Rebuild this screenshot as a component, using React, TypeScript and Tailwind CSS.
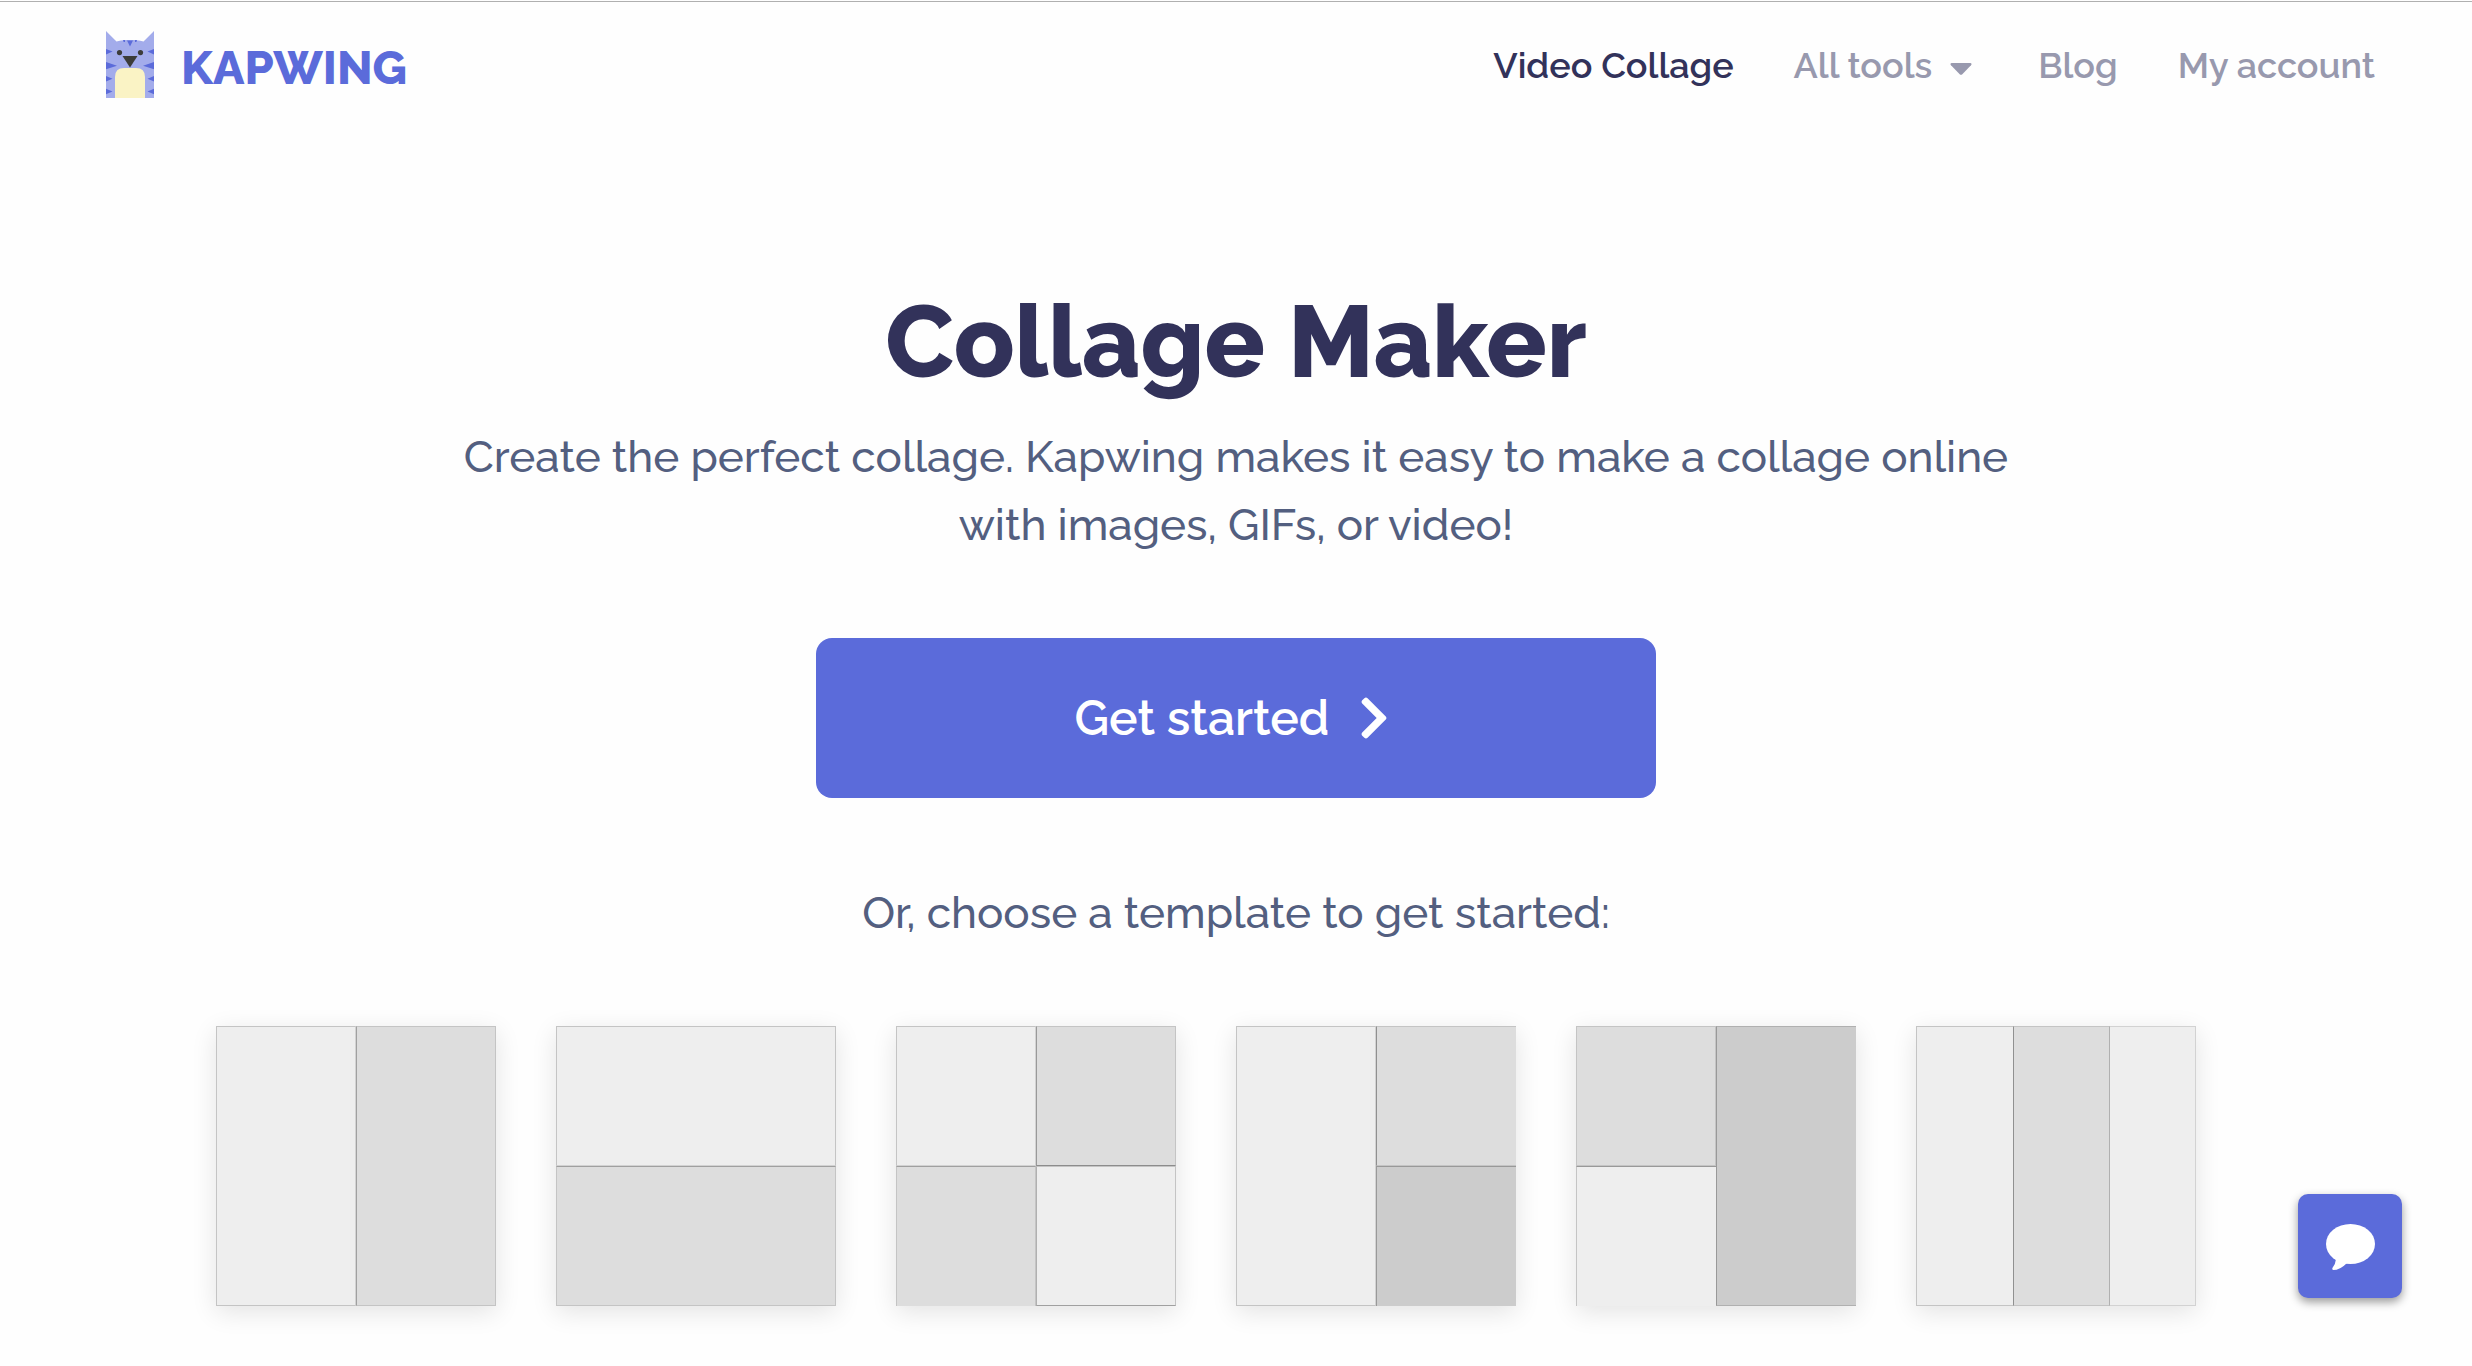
import React from "react";
import clsx from "clsx";

function CatLogo() {
  return (
    <svg className="mb-0.5 h-[67px] w-12 shrink-0" viewBox="0 0 48 67" aria-hidden="true">
      <path
        fill="#a3aceb"
        d="M0 0 L10.5 10.6 Q14.5 9 20 9 H28 Q33.5 9 37.5 10.6 L48 0 V67 H0 Z"
      />
      <g fill="#5b6bda">
        <path d="M21 9.5 H27 L24 15.5 Z" />
        <path d="M17 9 H19 V11 H17.6 Z" />
        <path d="M31 9 H29 V11 H30.4 Z" />
        <path d="M0 18 L6.5 20.6 L0 23.4 Z M48 18 L41.5 20.6 L48 23.4 Z" />
        <path d="M0 31 L11 34.7 L0 38.2 Z M48 31 L37 34.7 L48 38.2 Z" />
        <path d="M0 45 L6.5 47.8 L0 50.6 Z M48 45 L41.5 47.8 L48 50.6 Z" />
        <path d="M0 57.8 L6.5 60.4 L0 63.2 Z M48 57.8 L41.5 60.4 L48 63.2 Z" />
      </g>
      <path fill="#faf3c5" d="M9 67 V46 Q9 37 18 37 H30 Q39 37 39 46 V67 Z" />
      <g fill="#3c3c3a">
        <circle cx="13.5" cy="21.6" r="2.6" />
        <circle cx="34.5" cy="21.6" r="2.6" />
        <path d="M16.5 25 H31.5 L24 36.5 Z" />
      </g>
    </svg>
  );
}

function Header() {
  return (
    <header className="mt-px flex border-t border-[#b0b0b0] pr-[97px] pl-[106px]">
      <div className="flex min-h-[126px] w-full items-center justify-between">
        <a href="#" className="flex items-center gap-[27px]">
          <CatLogo />
          <span className="pt-1.5 text-[47px] leading-[54px] font-extrabold text-[#5b6bda]">
            KAPWING
          </span>
        </a>
        <nav className="flex items-center gap-[60px] text-[36px] leading-[54px] font-semibold whitespace-nowrap text-[#9899ae]">
          <a href="#" className="text-[#32325a]">
            Video Collage
          </a>
          <button type="button" className="flex items-center gap-[18px] pr-1.5">
            All tools
            <svg className="mt-2 h-3 w-[22px]" viewBox="0 0 22 12" aria-hidden="true">
              <path
                fill="currentColor"
                d="M1.5 0 H20.5 Q22.4 0.6 21 2.2 L12.3 11.2 Q11 12.2 9.7 11.2 L1 2.2 Q-0.4 0.6 1.5 0 Z"
              />
            </svg>
          </button>
          <a href="#">Blog</a>
          <a href="#">My account</a>
        </nav>
      </div>
    </header>
  );
}

interface Cell {
  name: string;
  className: string;
}

interface Template {
  label: string;
  grid: string;
  cells: Cell[];
}

const TEMPLATES: Template[] = [
  {
    label: "Two columns",
    grid: "grid-cols-2",
    cells: [
      { name: "left", className: "bg-[#eeeeee] border border-r-[#d2d2d2]" },
      { name: "right", className: "bg-[#dddddd] border border-l-[#a0a0a0]" },
    ],
  },
  {
    label: "Two rows",
    grid: "grid-rows-2",
    cells: [
      { name: "top", className: "bg-[#eeeeee] border border-b-[#d2d2d2]" },
      { name: "bottom", className: "bg-[#dddddd] border border-t-[#a0a0a0]" },
    ],
  },
  {
    label: "Four squares",
    grid: "grid-cols-2 grid-rows-2",
    cells: [
      { name: "a", className: "bg-[#eeeeee] border border-r-[#d2d2d2] border-b-[#d2d2d2]" },
      { name: "b", className: "bg-[#dddddd] border border-b-[#8c8c8c] border-l-[#999999]" },
      { name: "c", className: "bg-[#dddddd] border border-b-0 border-t-[#a0a0a0]" },
      { name: "d", className: "bg-[#eeeeee] border border-b-[#a0a0a0] border-l-[#b0b0b0]" },
    ],
  },
  {
    label: "One left, two right",
    grid: "grid-cols-2 grid-rows-2",
    cells: [
      { name: "left", className: "row-span-2 bg-[#eeeeee] border border-r-[#d2d2d2]" },
      { name: "top", className: "bg-[#dddddd] border border-r-0 border-l-[#909090]" },
      {
        name: "bottom",
        className: "bg-[#cccccc] border border-r-0 border-b-0 border-l-[#999999] border-t-[#999999]",
      },
    ],
  },
  {
    label: "Two left, one right",
    grid: "grid-cols-2 grid-rows-2 grid-flow-col",
    cells: [
      { name: "top", className: "bg-[#dddddd] border" },
      { name: "bottom", className: "bg-[#eeeeee] border border-r-0 border-b-0 border-t-[#999999]" },
      {
        name: "right",
        className: "row-span-2 bg-[#cccccc] border border-r-0 border-l-[#999999] border-t-[#b0b0b0] border-b-[#b0b0b0]",
      },
    ],
  },
  {
    label: "Three columns",
    grid: "grid-cols-[97fr_97fr_86fr]",
    cells: [
      { name: "left", className: "bg-[#eeeeee] border border-r-0" },
      { name: "middle", className: "bg-[#dddddd] border border-l-[#909090] border-r-[#b0b0b0]" },
      { name: "right", className: "bg-[#eeeeee] border border-l-0 border-[#d2d2d2]" },
    ],
  },
];

function TemplateCard({ template }: { template: Template }) {
  return (
    <button
      type="button"
      aria-label={template.label}
      className={clsx("grid aspect-square w-full shadow-[0_6px_24px_rgba(0,0,0,0.11)]", template.grid)}
    >
      {template.cells.map((cell) => (
        <span key={cell.name} className={clsx("border-[#c4c4c4]", cell.className)} />
      ))}
    </button>
  );
}

function ChatButton() {
  return (
    <button
      type="button"
      aria-label="Open chat"
      className="fixed right-[70px] bottom-[68px] flex size-[104px] items-center justify-center rounded-[10px] bg-[#5b6bda] pt-0.5 shadow-[0_4px_10px_rgba(0,0,0,0.4)]"
    >
      <svg className="h-[46px] w-[49px]" viewBox="0 0 49 46" aria-hidden="true">
        <ellipse cx="24.5" cy="20" rx="24.5" ry="20" fill="#ffffff" />
        <path fill="#ffffff" d="M10 35 Q9.6 40 6.4 44 Q5.6 45.6 7.2 46 Q14 46 20.5 39.4 L22 34 Z" />
      </svg>
    </button>
  );
}

export default function App() {
  return (
    <div className="flex min-h-screen flex-col bg-[#fefefe] font-['Raleway','Lato',sans-serif] text-[#535f80]">
      <Header />
      <main className="flex flex-col items-center pt-[154px] pb-[60px] text-center text-[44px] leading-[68px] font-medium">
        <h1 className="text-[100px] leading-[120px] font-extrabold text-[#32325a]">Collage Maker</h1>
        <p className="mt-[21px] max-w-[1600px]">
          Create the perfect collage. Kapwing makes it easy to make a collage online with images, GIFs,
          or video!
        </p>
        <button
          type="button"
          className="mt-[79px] flex h-40 w-full max-w-[840px] items-center justify-center gap-[30px] rounded-2xl bg-[#5b6bda] pr-2 text-[48px] font-semibold text-white"
        >
          Get started
          <svg className="h-12 w-[30px]" viewBox="0 0 320 512" aria-hidden="true">
            <path
              fill="currentColor"
              d="M285.476 272.971L91.132 467.314c-9.373 9.373-24.569 9.373-33.941 0l-22.667-22.667c-9.357-9.357-9.375-24.522-.04-33.901L188.505 256 34.484 101.255c-9.335-9.379-9.317-24.544.04-33.901l22.667-22.667c9.373-9.373 24.569-9.373 33.941 0L285.475 239.03c9.373 9.372 9.373 24.568.001 33.941z"
            />
          </svg>
        </button>
        <p className="mt-[81px]">Or, choose a template to get started:</p>
        <div className="mt-[79px] w-full max-w-[2040px] pr-[60px]">
          <div className="grid grid-cols-6 gap-[60px]">
            {TEMPLATES.map((template) => (
              <TemplateCard key={template.label} template={template} />
            ))}
          </div>
        </div>
      </main>
      <ChatButton />
    </div>
  );
}
